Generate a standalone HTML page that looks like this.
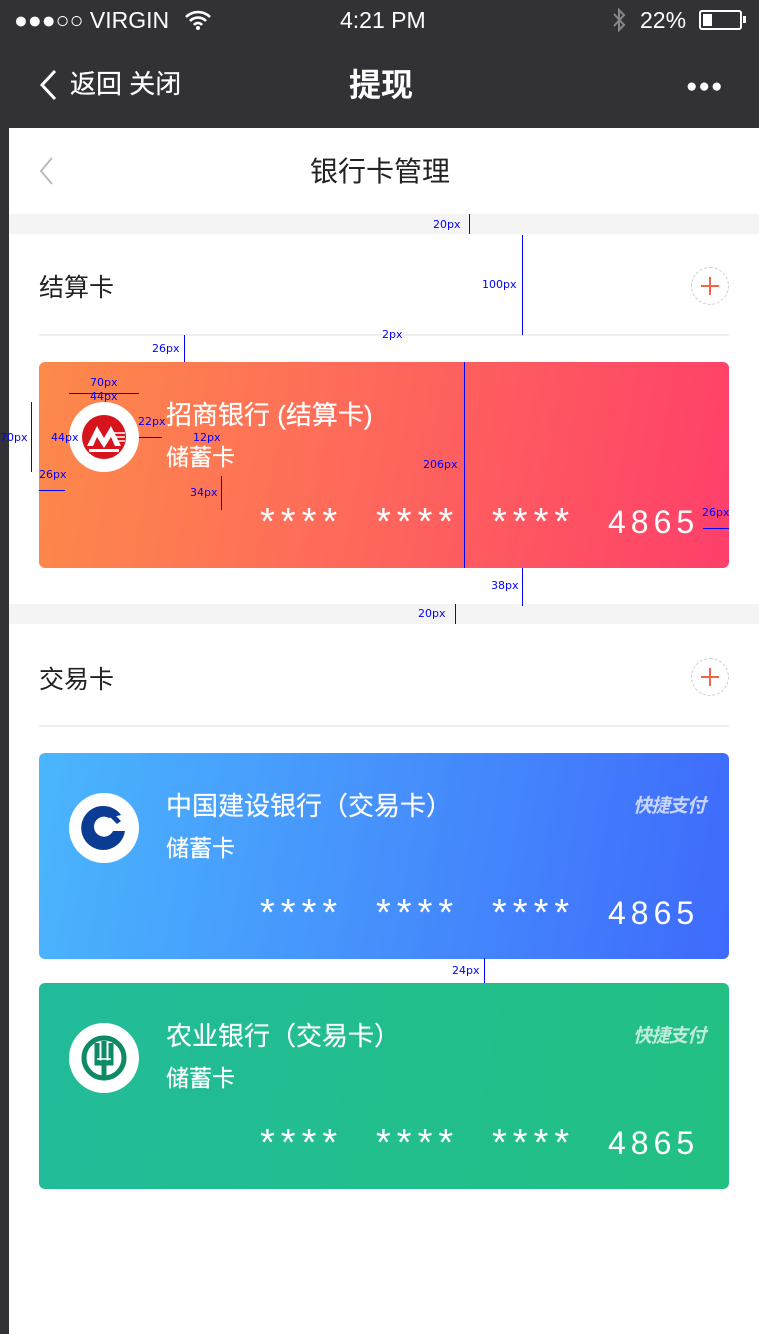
<!DOCTYPE html>
<html><head><meta charset="utf-8">
<style>
*{margin:0;padding:0;box-sizing:border-box}
body{width:759px;height:1334px;position:relative;overflow:hidden;background:#fff;font-family:"Liberation Sans","Noto Sans CJK SC",sans-serif}
.a{position:absolute}
.dark{background:#323136}
.card{position:absolute;left:39px;width:690px;height:206px;border-radius:6px;color:#fff}
.logo{position:absolute;left:30px;top:40px;width:70px;height:70px;border-radius:50%;background:#fff}
.name{position:absolute;left:127px;top:36px;font-size:26px;line-height:34px;white-space:nowrap;-webkit-text-stroke:0.2px #fff}
.sub{position:absolute;left:127px;top:80px;font-size:23px;line-height:30px;-webkit-text-stroke:0.2px #fff}
.st{position:absolute;top:138px;font-size:38px;line-height:44px;letter-spacing:6px;font-family:"Liberation Sans",sans-serif}
.dg{position:absolute;top:140px;font-size:32px;line-height:40px;letter-spacing:5px;font-family:"Liberation Sans",sans-serif}
.plus{position:absolute;left:691px;width:38px;height:38px;border:1px dashed #ccc;border-radius:50%}
.plus:before{content:"";position:absolute;left:9px;top:17px;width:18px;height:2px;background:#f0654a}
.plus:after{content:"";position:absolute;left:17px;top:9px;width:2px;height:18px;background:#f0654a}
.sec{position:absolute;left:39px;font-size:25px;color:#222}
.line{position:absolute;left:39px;width:690px;height:2px;background:#efefef}
.band{position:absolute;left:9px;width:750px;height:20px;background:#f4f4f4}
.kj{position:absolute;right:24px;top:38px;font-size:19px;font-style:italic;font-weight:bold;opacity:.7;letter-spacing:-1px}
.bl{position:absolute;color:#00f;font-size:11px;font-family:"DejaVu Sans",sans-serif}
.vl{position:absolute;width:1px;background:#00f}
.hl{position:absolute;height:1px;background:#00f}
</style></head><body>
<div class="a dark" style="left:0;top:0;width:9px;height:1334px"></div>
<div class="a dark" style="left:0;top:0;width:759px;height:128px"></div>
<div class="a" style="left:14px;top:5px;color:#fff;font-size:23px;line-height:30px">●●●○○ VIRGIN</div>
<svg class="a" style="left:184px;top:9px" width="28" height="22" viewBox="0 0 28 22"><path d="M2 8a17 17 0 0 1 24 0M6 12a11 11 0 0 1 16 0M10 16a5 5 0 0 1 8 0" stroke="#fff" stroke-width="2.6" fill="none"/><circle cx="14" cy="19" r="2" fill="#fff"/></svg>
<div class="a" style="left:340px;top:5px;color:#fff;font-size:23px;line-height:30px">4:21 PM</div>
<svg class="a" style="left:611px;top:7px" width="16" height="26" viewBox="0 0 16 26"><path d="M3 7l10 11-5 5V3l5 5L3 19" stroke="#888" stroke-width="2" fill="none"/></svg>
<div class="a" style="left:640px;top:5px;color:#fff;font-size:23px;line-height:30px">22%</div>
<div class="a" style="left:699px;top:10px;width:43px;height:20px;border:2px solid #fff;border-radius:3px"><div style="position:absolute;left:2px;top:2px;width:9px;height:12px;background:#fff"></div></div>
<div class="a" style="left:743px;top:16px;width:3px;height:7px;background:#fff"></div>
<svg class="a" style="left:38px;top:69px" width="20" height="32" viewBox="0 0 20 32"><path d="M17 2L4 16l13 14" stroke="#fff" stroke-width="3" fill="none"/></svg>
<div class="a" style="left:70px;top:67px;color:#fff;font-size:26px;line-height:34px;-webkit-text-stroke:0.2px #fff">返回 关闭</div>
<div class="a" style="left:349px;top:64px;color:#fff;font-size:32px;font-weight:bold;line-height:42px">提现</div>
<div class="a" style="left:686px;top:76px;color:#fff;font-size:19px;letter-spacing:1px">●●●</div>

<svg class="a" style="left:36px;top:156px" width="20" height="30" viewBox="0 0 20 30"><path d="M16 2L5 15l11 13" stroke="#bbb" stroke-width="2" fill="none"/></svg>
<div class="a" style="left:310px;top:153px;font-size:28px;line-height:38px;color:#222">银行卡管理</div>
<div class="band" style="top:214px"></div>

<div class="sec" style="top:268px">结算卡</div>
<div class="plus" style="top:267px"></div>
<div class="line" style="top:334px"></div>

<div class="card" style="top:362px;background:linear-gradient(100deg,#fd8a4a 0%,#fe6a5a 45%,#ff3f6a 100%)">
 <div class="logo"><svg width="70" height="70" viewBox="0 0 70 70"><circle cx="35" cy="35" r="22" fill="#d7141d"/><path d="M18 44l10-20 7 12 7-12 10 20h-6l-4-9-7 11-7-11-4 9z" fill="#fff"/><path d="M20 47h30v3H20z" fill="#fff"/><path d="M44 31h12M44 35h12M44 39h12" stroke="#fff" stroke-width="1.4"/></svg></div>
 <div class="name">招商银行 (结算卡)</div>
 <div class="sub">储蓄卡</div>
 <div class="st" style="left:221px">****</div><div class="st" style="left:337px">****</div><div class="st" style="left:453px">****</div><div class="dg" style="left:569px">4865</div>
</div>
<div class="band" style="top:604px"></div>

<div class="sec" style="top:660px">交易卡</div>
<div class="plus" style="top:658px"></div>
<div class="line" style="top:725px"></div>

<div class="card" style="top:753px;background:linear-gradient(100deg,#4ab6fd 0%,#4690fc 50%,#3e6afc 100%)">
 <div class="logo"><svg width="70" height="70" viewBox="0 0 70 70"><path d="M52 22a22 22 0 1 0 4 16H44a10 10 0 1 1-4-13z" fill="#0b3c93"/><path d="M35 28l8 8-8 8-8-8z" fill="#fff"/><path d="M40 16l12 12-4 3-12-12z" fill="#0b3c93"/></svg></div>
 <div class="name">中国建设银行（交易卡）</div>
 <div class="sub">储蓄卡</div>
 <div class="kj">快捷支付</div>
 <div class="st" style="left:221px">****</div><div class="st" style="left:337px">****</div><div class="st" style="left:453px">****</div><div class="dg" style="left:569px">4865</div>
</div>

<div class="card" style="top:983px;background:linear-gradient(100deg,#22bb9a 0%,#22c082 100%)">
 <div class="logo"><svg width="70" height="70" viewBox="0 0 70 70"><circle cx="35" cy="35" r="20" fill="none" stroke="#0e8a66" stroke-width="5"/><path d="M28 20v20h14V20M35 18v37" stroke="#0e8a66" stroke-width="5" fill="none"/><path d="M28 36h14" stroke="#fff" stroke-width="1.5"/></svg></div>
 <div class="name">农业银行（交易卡）</div>
 <div class="sub">储蓄卡</div>
 <div class="kj">快捷支付</div>
 <div class="st" style="left:221px">****</div><div class="st" style="left:337px">****</div><div class="st" style="left:453px">****</div><div class="dg" style="left:569px">4865</div>
</div>

<div class="vl" style="left:469px;top:214px;height:20px"></div><div class="bl" style="left:433px;top:218px">20px</div>
<div class="vl" style="left:522px;top:235px;height:100px"></div><div class="bl" style="left:482px;top:278px">100px</div>
<div class="bl" style="left:382px;top:328px">2px</div>
<div class="vl" style="left:184px;top:335px;height:27px"></div><div class="bl" style="left:152px;top:342px">26px</div>
<div class="vl" style="left:464px;top:362px;height:206px"></div><div class="bl" style="left:423px;top:458px">206px</div>
<div class="vl" style="left:522px;top:568px;height:38px"></div><div class="bl" style="left:491px;top:579px">38px</div>
<div class="vl" style="left:455px;top:604px;height:20px"></div><div class="bl" style="left:418px;top:607px">20px</div>
<div class="vl" style="left:484px;top:958px;height:25px"></div><div class="bl" style="left:452px;top:964px">24px</div>
<div class="bl" style="left:90px;top:376px">70px</div><div class="hl" style="left:69px;top:393px;width:70px"></div>
<div class="bl" style="left:90px;top:390px">44px</div>
<div class="vl" style="left:31px;top:402px;height:70px"></div><div class="bl" style="left:0;top:431px">70px</div>
<div class="bl" style="left:51px;top:431px">44px</div>
<div class="bl" style="left:138px;top:415px">22px</div><div class="hl" style="left:139px;top:437px;width:23px"></div>
<div class="bl" style="left:193px;top:431px">12px</div>
<div class="bl" style="left:190px;top:486px">34px</div><div class="vl" style="left:221px;top:476px;height:34px"></div>
<div class="bl" style="left:39px;top:468px">26px</div><div class="hl" style="left:39px;top:490px;width:26px"></div>
<div class="bl" style="left:702px;top:506px">26px</div><div class="hl" style="left:703px;top:528px;width:26px"></div>
</body></html>
